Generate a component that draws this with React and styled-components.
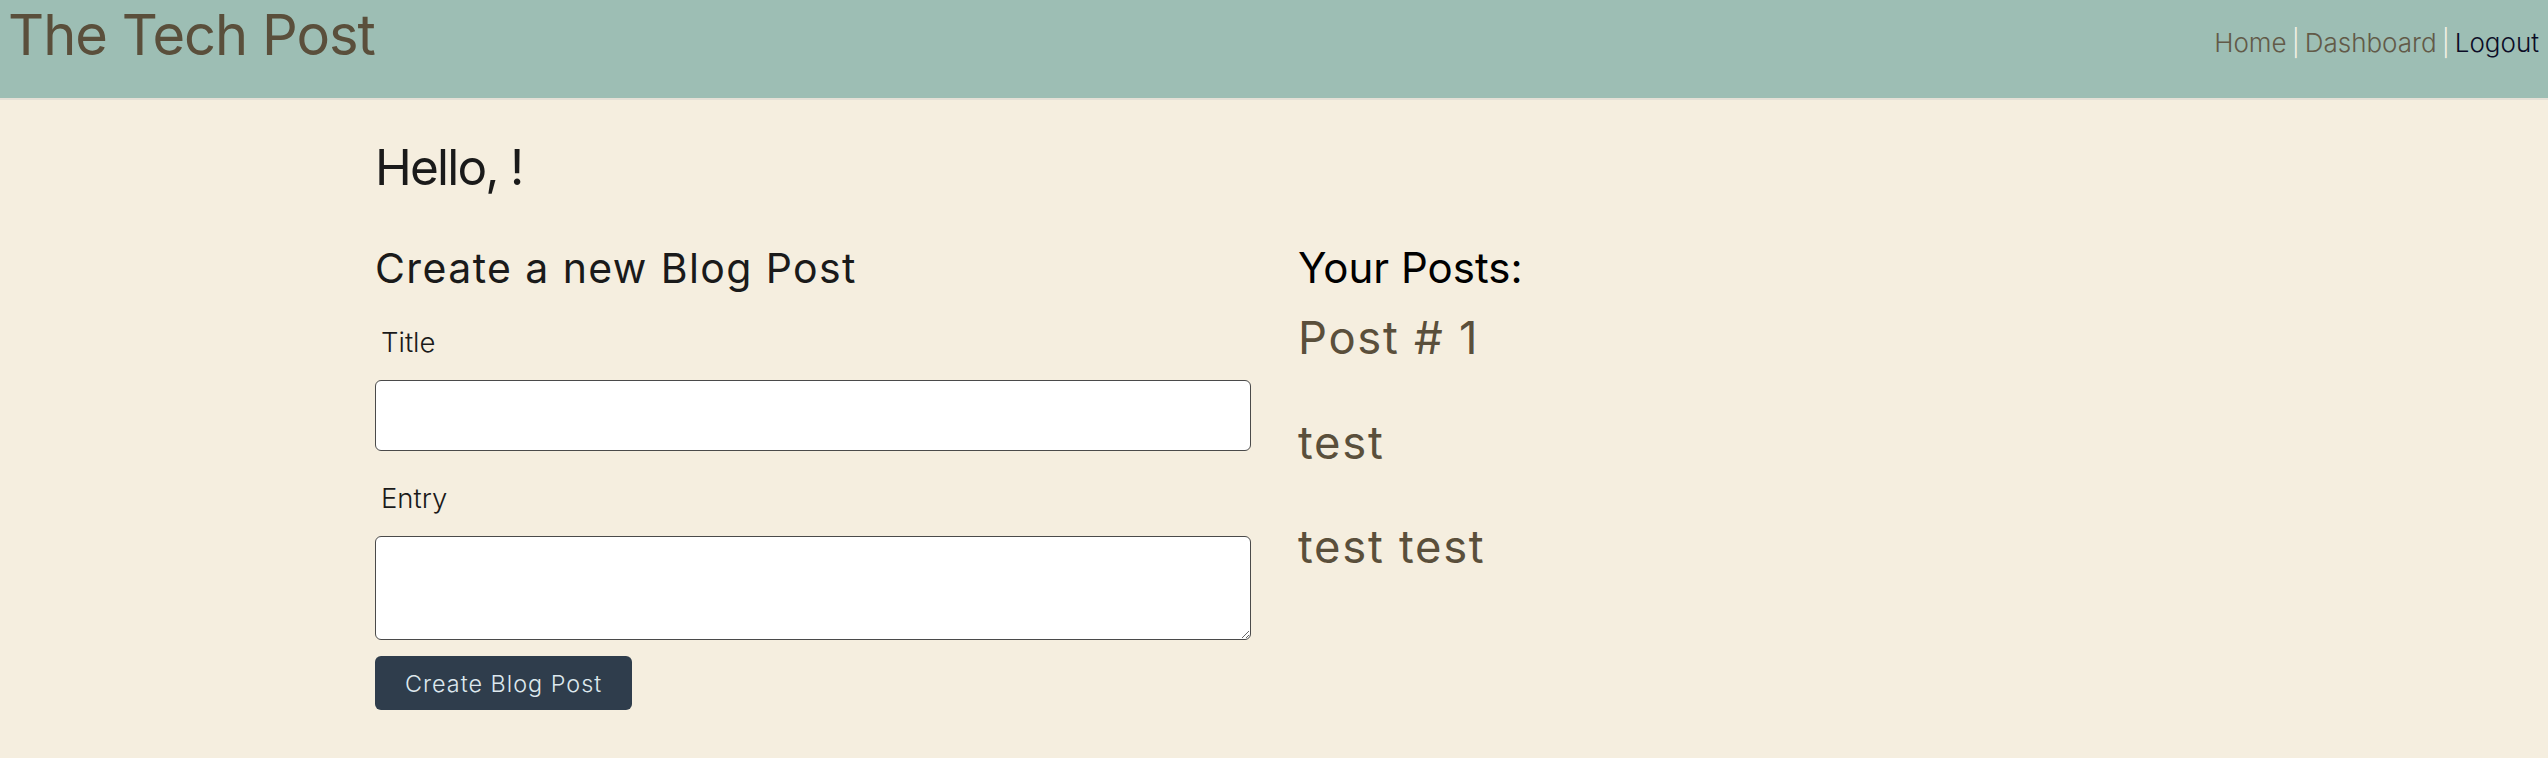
import React from "react";
import styled, { createGlobalStyle } from "styled-components";

const GlobalStyle = createGlobalStyle`
  html, body {
    margin: 0;
    padding: 0;
    background: #f5eedf;
    font-family: "Inter", "Noto Sans", sans-serif;
  }
  body { min-height: 100vh; }
  * { box-sizing: border-box; }
`;

const Header = styled.header`
  display: flex;
  justify-content: space-between;
  align-items: flex-start;
  height: 100px;
  padding: 0 9px 0 8px;
  background: #9dbeb4;
  border-bottom: 2px solid #e4e0d6;
`;

const Brand = styled.h1`
  margin: 2px 0 0;
  font-size: 56px;
  line-height: 67px;
  font-weight: 400;
  letter-spacing: -1px;
  color: #5a4f3b;
`;

const Nav = styled.nav`
  display: flex;
  align-items: center;
  gap: 5px;
  padding-top: 23px;
  font-size: 26px;
  line-height: 39px;
  font-weight: 300;
`;

const NavLink = styled.a`
  color: ${(p) => (p.$active ? "#0c0c26" : "#625a48")};
  text-decoration: none;
`;

const Sep = styled.span`
  color: #f4f1e4;
`;

const Main = styled.main`
  width: 1798px;
  margin: 0 auto;
  padding-top: 37px;
`;

const Greeting = styled.h2`
  margin: 0 0 46px;
  font-size: 49.5px;
  line-height: 60px;
  font-weight: 400;
  letter-spacing: -1.8px;
  color: #1a1a1a;
`;

const Columns = styled.div`
  display: grid;
  grid-template-columns: 876px 1fr;
  column-gap: 47px;
  align-items: start;
`;

const FormColumn = styled.form`
  display: flex;
  flex-direction: column;
`;

const SectionTitle = styled.h3`
  margin: 0 0 ${(p) => p.$gap || 0}px;
  font-size: ${(p) => p.$size}px;
  line-height: 50px;
  font-weight: 400;
  letter-spacing: ${(p) => p.$spacing || 0}px;
  color: ${(p) => p.$color};
`;

const Label = styled.label`
  display: block;
  padding-left: 6px;
  margin-bottom: 21px;
  font-size: 27.5px;
  line-height: 34px;
  font-weight: 300;
  color: #1a1a1a;
`;

const TextInput = styled.input`
  display: block;
  width: 100%;
  height: 71px;
  margin: 0 0 30px;
  border: 1px solid #4a4a4a;
  border-radius: 6px;
  background: #ffffff;
  font: inherit;
  font-size: 24px;
  padding: 0 16px;
`;

const TextArea = styled.textarea`
  display: block;
  width: 100%;
  height: 104px;
  margin: 0 0 16px;
  border: 1px solid #4a4a4a;
  border-radius: 6px;
  background: #ffffff;
  font: inherit;
  font-size: 24px;
  padding: 10px 16px;
`;

const SubmitButton = styled.button`
  align-self: flex-start;
  height: 54px;
  padding: 0 30px;
  border: none;
  border-radius: 6px;
  background: #2f3d4c;
  color: #dde8ee;
  font-family: inherit;
  font-size: 23.4px;
  font-weight: 300;
  letter-spacing: 1px;
  cursor: pointer;
`;

const PostsColumn = styled.section`
  display: flex;
  flex-direction: column;
`;

const PostLine = styled.p`
  margin: 0 0 48.5px;
  font-size: 45.4px;
  line-height: 56px;
  font-weight: 400;
  letter-spacing: 1.7px;
  color: #5a4f3b;
`;

const posts = ["Post # 1", "test", "test test"];

export default function App() {
  return (
    <>
      <GlobalStyle />
      <Header>
        <Brand>The Tech Post</Brand>
        <Nav>
          <NavLink href="#">Home</NavLink>
          <Sep>|</Sep>
          <NavLink href="#">Dashboard</NavLink>
          <Sep>|</Sep>
          <NavLink href="#" $active>
            Logout
          </NavLink>
        </Nav>
      </Header>
      <Main>
        <Greeting>Hello, !</Greeting>
        <Columns>
          <FormColumn onSubmit={(e) => e.preventDefault()}>
            <SectionTitle $size={41} $color="#1a1a1a" $gap={32} $spacing={1.4}>
              Create a new Blog Post
            </SectionTitle>
            <Label htmlFor="title">Title</Label>
            <TextInput id="title" type="text" />
            <Label htmlFor="entry">Entry</Label>
            <TextArea id="entry" />
            <SubmitButton type="submit">Create Blog Post</SubmitButton>
          </FormColumn>
          <PostsColumn>
            <SectionTitle $size={42} $color="#000000" $gap={17}>
              Your Posts:
            </SectionTitle>
            {posts.map((p) => (
              <PostLine key={p}>{p}</PostLine>
            ))}
          </PostsColumn>
        </Columns>
      </Main>
    </>
  );
}
